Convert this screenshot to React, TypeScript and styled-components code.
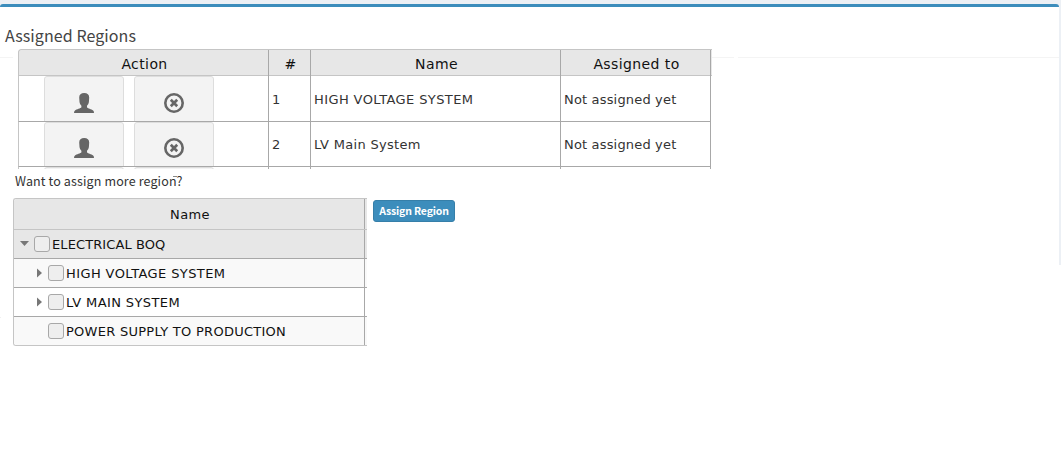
import React from 'react';
import styled, { createGlobalStyle } from 'styled-components';

const Global = createGlobalStyle`
  * { box-sizing: border-box; }
  body { margin: 0; background: #fff; overflow: hidden; }
`;

const sans = `"Noto Sans CJK SC", "Open Sans", sans-serif`;
const grid = `Verdana, "DejaVu Sans", sans-serif`;

const Page = styled.div`
  height: 460px;
  width: 1061px;
  padding-top: 4px;
  background: linear-gradient(#ecf0f5, #ecf0f5) 0 0 / 1061px 8px no-repeat,
    linear-gradient(#ecf0f5, #ecf0f5) 1059px 0 / 2px 265px no-repeat, #fff;
`;

const Box = styled.section`
  width: 1059px;
  height: 456px;
  border-top: 3px solid #3c8dbc;
  border-radius: 3px 3px 0 0;
  background: linear-gradient(#f4f4f4, #f4f4f4) 0 50px / 13px 1px no-repeat,
    linear-gradient(#f4f4f4, #f4f4f4) 712px 50px / 22px 1px no-repeat,
    linear-gradient(#f4f4f4, #f4f4f4) 738px 50px / 321px 1px no-repeat,
    linear-gradient(#f0f0f0, #f0f0f0) 0 310px / 1px 1px no-repeat,
    linear-gradient(#fff, #fff) 0 0 / 1059px 258px no-repeat;
`;

const Title = styled.h3`
  margin: 0;
  height: 42px;
  padding: 16px 0 0 5px;
  font: 400 16px/24px ${sans};
  letter-spacing: 0.08px;
  color: #444;
  white-space: nowrap;
`;

const Assigned = styled.div`
  width: 694px;
  height: 120px;
  margin-left: 18px;
  overflow: hidden;
  border-radius: 3px 0 0 0;
`;

const AssignedRow = styled.div<{ $h: number; $head?: boolean }>`
  display: grid;
  grid-template-columns: 250px 42px 250px 150px;
  width: ${p => (p.$head ? 694 : 693)}px;
  height: ${p => p.$h}px;
  background: ${p => (p.$head ? '#e7e7e7' : '#fff')};
  border-bottom: 1px solid ${p => (p.$head ? '#c5c5c5' : '#a8a8a8')};
  border-top: ${p => (p.$head ? '1px solid #c5c5c5' : '0')};
  border-left: 1px solid #c5c5c5;
  border-radius: ${p => (p.$head ? '3px 0 0 0' : '0')};
`;

const HeadCell = styled.div`
  border-right: 1px solid #a8a8a8;
  padding-left: 2px;
  text-align: center;
  font: 400 14px/28px ${grid};
  letter-spacing: 0.4px;
  color: #111;
  white-space: nowrap;
`;

const Cell = styled.div<{ $line?: number; $track?: number }>`
  border-right: 1px solid #a8a8a8;
  padding-left: 3px;
  font: 400 13px/${p => p.$line ?? 47}px ${grid};
  letter-spacing: ${p => p.$track ?? 0.17}px;
  color: #333;
  white-space: nowrap;
  overflow: hidden;
`;

const Actions = styled(Cell)`
  display: flex;
  gap: 10px;
  padding-left: 25px;
`;

const ActionButton = styled.button<{ $pad?: number }>`
  width: 80px;
  height: 54px;
  flex: none;
  display: flex;
  justify-content: center;
  padding: ${p => p.$pad ?? 16}px 0 0;
  background: #f3f3f3;
  border: 1px solid #ddd;
  border-radius: 3px;
`;

const Question = styled.p`
  position: relative;
  margin: 0;
  height: 29px;
  padding: 3px 0 0 15px;
  font: 400 12.5px/18px ${sans};
  letter-spacing: 0.13px;
  color: #333;
  white-space: nowrap;

  &::after {
    content: '';
    position: absolute;
    left: 173px;
    top: 7px;
    width: 4px;
    height: 1px;
    background: #888;
  }
`;

const Picker = styled.div`
  display: flex;
  align-items: flex-start;
  gap: 6px;
  padding-left: 13px;
`;

const Tree = styled.div`
  width: 354px;
  height: 148px;
  border: 1px solid #c5c5c5;
  border-right: 0;
  border-radius: 3px 0 0 3px;
  overflow: hidden;
`;

const TreeRow = styled.div<{ $bg: string; $head?: boolean }>`
  display: flex;
  height: ${p => (p.$head ? 31 : 29)}px;
  background: ${p => p.$bg};
  border-bottom: 1px solid ${p => (p.$head ? '#c5c5c5' : '#a8a8a8')};
  &:last-child { border-bottom: 0; height: 28px; }
`;

const TreeCell = styled.div<{ $depth: number }>`
  width: 351px;
  height: 28px;
  display: flex;
  align-items: center;
  border-right: 1px solid #a8a8a8;
  padding-left: ${p => 6 + p.$depth * 14}px;
`;

const TreeLabel = styled.span<{ $track: number }>`
  padding-top: 2px;
  font: 400 13px/26px ${grid};
  letter-spacing: ${p => p.$track}px;
  color: #111;
  white-space: nowrap;
`;

const TreeHead = styled(HeadCell)`
  width: 351px;
  font-size: 13px;
  line-height: 31px;
`;

const Toggle = styled.span`
  width: 14px;
  height: 28px;
  display: flex;
  align-items: center;
`;

const Check = styled.span`
  width: 16px;
  height: 16px;
  margin-right: 2px;
  background: #eee;
  border: 1px solid #a8a8a8;
  border-radius: 3px;
`;

const AssignButton = styled.button`
  width: 82px;
  height: 22px;
  margin-top: 2px;
  padding: 0;
  border: 1px solid #367fa9;
  border-radius: 3px;
  background: #3c8dbc;
  color: #fff;
  font: 700 10.5px/18px ${sans};
  letter-spacing: -0.15px;
  white-space: nowrap;
`;

const UserIcon = () => (
  <svg width="20" height="20" viewBox="0 0 20 20" fill="#666">
    <path d="M10.200 0C7 0 5.200 1.700 5.200 4.500L5.500 9C5.800 11 6.600 12 7.400 12.700V14.300C6.800 15.400 2.500 16.200 1 17.500C.3 18.100 0 19 0 20H20C20 19 19.800 18.100 19.100 17.500C17.600 16.200 13.500 15.400 13 14.300V12.700C13.800 12 14.600 11 14.900 9L15.200 4.500C15.200 1.700 13.400 0 10.200 0Z" />
  </svg>
);

const RemoveIcon = () => (
  <svg width="20" height="20" viewBox="0 0 20 20" fill="none" stroke="#666">
    <circle cx="10" cy="10" r="8.700" strokeWidth="2.600" />
    <path d="M6.800 6.800l6.400 6.400M13.200 6.800l-6.400 6.400" strokeWidth="2.700" />
  </svg>
);

const Arrow = ({ open }: { open: boolean }) => (
  <svg width="10" height="10" viewBox="0 0 10 10" fill="#777">
    {open ? <path d="M0 2h9L4.500 7z" /> : <path d="M3 0.500v9L8 5z" />}
  </svg>
);

const regions = [
  { id: 1, name: 'HIGH VOLTAGE SYSTEM', line: 48, pad: 16, track: 0.4 },
  { id: 2, name: 'LV Main System', line: 46, pad: 15, track: 0.3 },
];

const nodes = [
  { name: 'ELECTRICAL BOQ', depth: 0, bg: '#e7e7e7', arrow: 'open', track: 0.1 },
  { name: 'HIGH VOLTAGE SYSTEM', depth: 1, bg: '#f9f9f9', arrow: 'closed', track: 0.4 },
  { name: 'LV MAIN SYSTEM', depth: 1, bg: '#fff', arrow: 'closed', track: 0.4 },
  { name: 'POWER SUPPLY TO PRODUCTION', depth: 1, bg: '#f9f9f9', arrow: '', track: 0.27 },
];

export default function App() {
  return (
    <Page>
      <Global />
      <Box>
        <Title>Assigned Regions</Title>
        <Assigned>
          <AssignedRow $h={27} $head>
            <HeadCell>Action</HeadCell>
            <HeadCell>#</HeadCell>
            <HeadCell>Name</HeadCell>
            <HeadCell>Assigned to</HeadCell>
          </AssignedRow>
          {regions.map((r, i) => (
            <AssignedRow key={r.id} $h={i === 0 ? 46 : 45}>
              <Actions>
                <ActionButton $pad={r.pad} aria-label="Assign user"><UserIcon /></ActionButton>
                <ActionButton $pad={r.pad} aria-label="Remove"><RemoveIcon /></ActionButton>
              </Actions>
              <Cell $line={r.line}>{r.id}</Cell>
              <Cell $line={r.line} $track={r.track}>{r.name}</Cell>
              <Cell $line={r.line}>Not assigned yet</Cell>
            </AssignedRow>
          ))}
          <AssignedRow $h={45}>
            <Actions>
              <ActionButton aria-label="Assign user" />
              <ActionButton aria-label="Remove" />
            </Actions>
            <Cell />
            <Cell />
            <Cell />
          </AssignedRow>
        </Assigned>
        <Question>Want to assign more region?</Question>
        <Picker>
          <Tree>
            <TreeRow $bg="#e7e7e7" $head>
              <TreeHead>Name</TreeHead>
            </TreeRow>
            {nodes.map(n => (
              <TreeRow key={n.name} $bg={n.bg}>
                <TreeCell $depth={n.depth}>
                  <Toggle>{n.arrow && <Arrow open={n.arrow === 'open'} />}</Toggle>
                  <Check />
                  <TreeLabel $track={n.track}>{n.name}</TreeLabel>
                </TreeCell>
              </TreeRow>
            ))}
          </Tree>
          <AssignButton>Assign Region</AssignButton>
        </Picker>
      </Box>
    </Page>
  );
}
